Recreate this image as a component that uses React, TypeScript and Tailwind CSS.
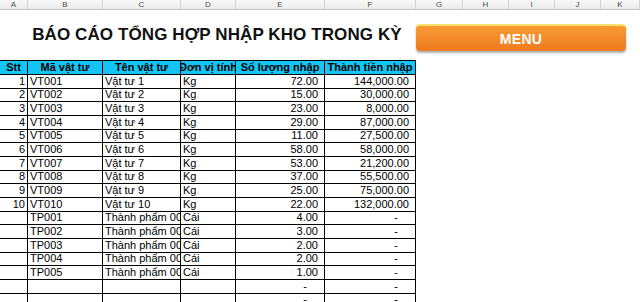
import React from 'react';

const sheetCols = [
  { key: 'A', w: 'w-[28px]' },
  { key: 'B', w: 'w-[75px]' },
  { key: 'C', w: 'w-[78px]' },
  { key: 'D', w: 'w-[55px]' },
  { key: 'E', w: 'w-[89px]' },
  { key: 'F', w: 'w-[91px]' },
  { key: 'G', w: 'w-[47px]' },
  { key: 'H', w: 'w-[46px]' },
  { key: 'I', w: 'w-[46px]' },
  { key: 'J', w: 'w-[46px]' },
  { key: 'K', w: 'flex-1' },
];

interface Row {
  stt: string;
  code: string;
  name: string;
  unit: string;
  qty: string;
  amount: string;
}

const rows: Row[] = [
  { stt: '1', code: 'VT001', name: 'Vật tư 1', unit: 'Kg', qty: '72.00', amount: '144,000.00' },
  { stt: '2', code: 'VT002', name: 'Vật tư 2', unit: 'Kg', qty: '15.00', amount: '30,000.00' },
  { stt: '3', code: 'VT003', name: 'Vật tư 3', unit: 'Kg', qty: '23.00', amount: '8,000.00' },
  { stt: '4', code: 'VT004', name: 'Vật tư 4', unit: 'Kg', qty: '29.00', amount: '87,000.00' },
  { stt: '5', code: 'VT005', name: 'Vật tư 5', unit: 'Kg', qty: '11.00', amount: '27,500.00' },
  { stt: '6', code: 'VT006', name: 'Vật tư 6', unit: 'Kg', qty: '58.00', amount: '58,000.00' },
  { stt: '7', code: 'VT007', name: 'Vật tư 7', unit: 'Kg', qty: '53.00', amount: '21,200.00' },
  { stt: '8', code: 'VT008', name: 'Vật tư 8', unit: 'Kg', qty: '37.00', amount: '55,500.00' },
  { stt: '9', code: 'VT009', name: 'Vật tư 9', unit: 'Kg', qty: '25.00', amount: '75,000.00' },
  { stt: '10', code: 'VT010', name: 'Vật tư 10', unit: 'Kg', qty: '22.00', amount: '132,000.00' },
  { stt: '', code: 'TP001', name: 'Thành phẩm 001', unit: 'Cái', qty: '4.00', amount: '-' },
  { stt: '', code: 'TP002', name: 'Thành phẩm 002', unit: 'Cái', qty: '3.00', amount: '-' },
  { stt: '', code: 'TP003', name: 'Thành phẩm 003', unit: 'Cái', qty: '2.00', amount: '-' },
  { stt: '', code: 'TP004', name: 'Thành phẩm 004', unit: 'Cái', qty: '2.00', amount: '-' },
  { stt: '', code: 'TP005', name: 'Thành phẩm 005', unit: 'Cái', qty: '1.00', amount: '-' },
  { stt: '', code: '', name: '', unit: '', qty: '-', amount: '-' },
  { stt: '', code: '', name: '', unit: '', qty: '-', amount: '-' },
];

const cell = 'shrink-0 overflow-hidden whitespace-nowrap border-r border-black';

const NumCell: React.FC<{ value: string; className: string }> = ({ value, className }) => (
  <div className={`${cell} ${className} text-right ${value === '-' ? 'pr-[17px]' : 'pr-[6px]'}`}>
    {value}
  </div>
);

const App: React.FC = () => {
  return (
    <div className="w-[640px] h-[302px] overflow-hidden bg-white font-['Liberation_Sans',Arial,sans-serif] text-black">
      {/* Column letters */}
      <div className="flex h-[10px] border-b border-[#c2c6cc] bg-gradient-to-b from-[#f8f8f8] to-[#ececec]">
        {sheetCols.map(c => (
          <div
            key={c.key}
            className={`${c.w} shrink-0 border-r border-[#d4d4d4] flex items-center justify-center text-[8px] leading-none text-[#4a4a4a]`}
          >
            {c.key}
          </div>
        ))}
      </div>

      {/* Title area */}
      <div className="relative h-[50px]">
        <div className="w-[416px] pl-[18px] pt-[15px] text-center text-[17px] font-bold leading-[20px] tracking-[0.1px] text-[#111]">
          BÁO CÁO TỔNG HỢP NHẬP KHO TRONG KỲ
        </div>
        <button className="absolute left-[416px] top-[14px] w-[210px] h-[27px] rounded-[4px] border-t-2 border-[#fde06a] bg-gradient-to-b from-[#f99a34] to-[#ec7a1e] shadow-[0_2px_2px_rgba(0,0,0,0.3)] text-white text-[14px] font-bold leading-none tracking-[0.3px]">
          MENU
        </button>
      </div>

      {/* Table */}
      <div className="w-[416px] text-[11px] leading-none">
        <div className="flex h-[15px] border-y border-black bg-[#12c5f4] font-bold">
          <div className={`${cell} w-[28px] flex items-center justify-center`}>Stt</div>
          <div className={`${cell} w-[75px] flex items-center justify-center`}>Mã vật tư</div>
          <div className={`${cell} w-[78px] flex items-center justify-center`}>Tên vật tư</div>
          <div className={`${cell} w-[55px] flex items-center justify-center`}>Đơn vị tính</div>
          <div className={`${cell} w-[89px] flex items-center justify-center`}>Số lượng nhập</div>
          <div className={`${cell} w-[91px] flex items-center justify-center`}>Thành tiền nhập</div>
        </div>
        {rows.map((r, i) => (
          <div key={i} className="flex h-[13.67px] items-center border-b border-black">
            <div className={`${cell} w-[28px] h-full flex items-center justify-end pr-[2px]`}>{r.stt}</div>
            <div className={`${cell} w-[75px] h-full flex items-center pl-[2px]`}>{r.code}</div>
            <div className={`${cell} w-[78px] h-full flex items-center pl-[2px]`}>{r.name}</div>
            <div className={`${cell} w-[55px] h-full flex items-center pl-[2px]`}>{r.unit}</div>
            <NumCell value={r.qty} className="w-[89px] h-full flex items-center justify-end" />
            <NumCell value={r.amount} className="w-[91px] h-full flex items-center justify-end" />
          </div>
        ))}
      </div>
    </div>
  );
};

export default App;
